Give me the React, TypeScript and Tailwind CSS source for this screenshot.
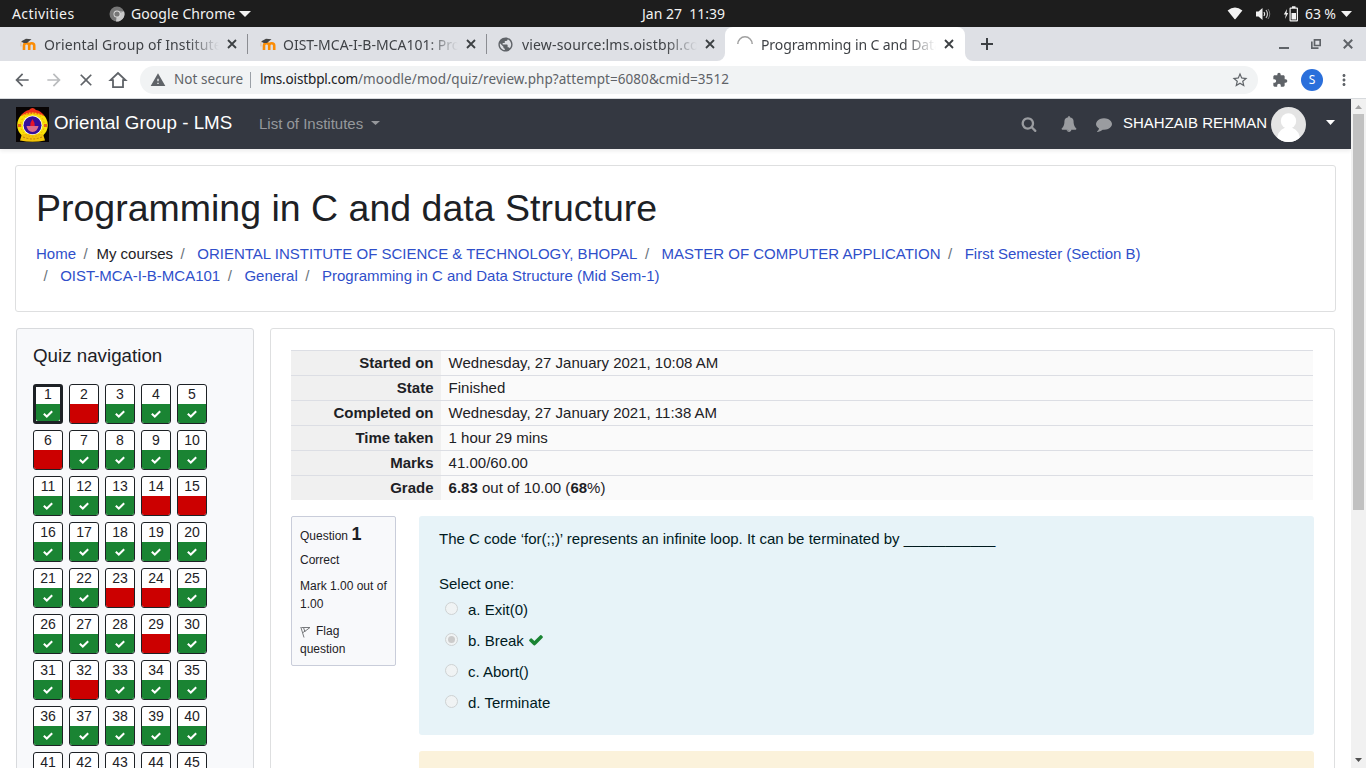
import React from "react";
import { MdArrowBack, MdArrowForward, MdClose, MdStarBorder, MdExtension, MdMoreVert, MdAdd, MdWarning, MdPublic } from "react-icons/md";

const CHECK =
  "M1671 566q0 40-28 68l-724 724-136 136q-28 28-68 28t-68-28l-136-136-362-362q-28-28-28-68t28-68l136-136q28-28 68-28t68 28l294 295 656-657q28-28 68-28t68 28l136 136q28 28 28 68z";
const SEARCH =
  "M1216 832q0-185-131.5-316.5t-316.5-131.5-316.5 131.5-131.5 316.5 131.5 316.5 316.5 131.5 316.5-131.5 131.5-316.5zm512 832q0 52-38 90t-90 38q-54 0-90-38l-343-342q-179 124-399 124-143 0-273.5-55.5t-225-150-150-225-55.5-273.5 55.5-273.5 150-225 225-150 273.5-55.5 273.5 55.5 225 150 150 225 55.5 273.5q0 220-124 399l343 343q37 37 37 90z";
const BELL =
  "M912 1696q0-16-16-16-59 0-101.5-42.5t-42.5-101.5q0-16-16-16t-16 16q0 73 51.5 124.5t124.5 51.5q16 0 16-16zm816-288q0 52-38 90t-90 38h-448q0 106-75 181t-181 75-181-75-75-181h-448q-52 0-90-38t-38-90q50-42 91-88t85-119.5 74.5-158.5 50-206 19.5-260q0-152 117-282.5t307-158.5q-8-19-8-39 0-40 28-68t68-28 68 28 28 68q0 20-8 39 190 28 307 158.5t117 282.5q0 139 19.5 260t50 206 74.5 158.5 85 119.5 91 88z";
const COMMENT =
  "M1792 896q0 174-120 321.5t-326 233-450 85.5q-70 0-145-8-198 175-460 242-49 14-114 22h-5q-15 0-27-10.5t-16-27.5v-1q-3-4-.5-12t2-10 4.5-9.5l6-9 7-8.5 8-9q7-8 31-34.5t34.5-38 31-39.5 32.5-51 27-59 26-76q-157-89-247.5-220t-90.5-281q0-174 120-321.5t326-233 450-85.5 450 85.5 326 233 120 321.5z";

function Fa({ d, className }: { d: string; className: string }) {
  return (
    <svg viewBox="0 0 1792 1792" fill="currentColor" className={className}>
      <path d={d} />
    </svg>
  );
}

function Caret({ className }: { className: string }) {
  return (
    <svg viewBox="0 0 10 5" preserveAspectRatio="none" fill="currentColor" className={className}>
      <path d="M0 0h10L5 5z" />
    </svg>
  );
}

function SystemBar() {
  return (
    <div className="flex h-[27px] shrink-0 items-center bg-[#1d1d1d] text-[14px] text-[#f2f2f2]">
      <div className="flex w-[455px] items-center pl-3">
        <span className="w-[97px] tracking-[0.42px]">Activities</span>
        <svg viewBox="0 0 16 16" className="h-4 w-4">
          <circle cx="8" cy="8" r="7.5" fill="#777" />
          <path d="M8 8 15 5.200A7.500 7.500 0 0 1 7 15.400z" fill="#c9c9c9" />
          <path d="M8 8 15 5.200H8z" fill="#aaa" />
          <circle cx="8" cy="8" r="3.5" fill="#ddd" />
          <circle cx="8" cy="8" r="2.600" fill="#777" />
        </svg>
        <span className="ml-[6px] w-[104px] whitespace-nowrap tracking-[0.07px]">Google Chrome</span>
        <Caret className="ml-1 h-[6px] w-[12px]" />
      </div>
      <div className="flex-1 pb-px pl-px text-center whitespace-pre">Jan 27  11:39</div>
      <div className="flex w-[455px] items-center justify-end pr-[14px]">
        <svg viewBox="0 0 16 13" className="h-[13px] w-4" fill="currentColor">
          <path d="M.6 3.600Q8-2.600 15.400 3.600L8.600 12Q8 12.600 7.400 12z" />
        </svg>
        <svg viewBox="0 0 16 14" className="ml-3 h-[14px] w-4" fill="none" stroke="currentColor">
          <path d="M1 4.500h2.500L7.500 1v12L3.500 9.500H1z" fill="currentColor" stroke="none" />
          <path d="M9 5q1.500 2 0 4" strokeWidth="1.200" />
          <path d="M11 3q3 4 0 8" strokeWidth="1.200" opacity=".8" />
          <path d="M13 2q3.500 5 0 10" opacity=".45" />
        </svg>
        <svg viewBox="0 0 16 16" className="ml-3 h-4 w-4" fill="currentColor">
          <path d="M4 3 .800 8.500h2L2 13l3.200-6H3.500z" />
          <path d="M6.500 2.500q0-1 1-1H9V.3h3.500v1.200H14q1 0 1 1v12q0 1-1 1H7.500q-1 0-1-1zM7.700 2.700v11.600h6.100V2.700z" fillRule="evenodd" />
          <path d="M8.500 7h4.500v6.500H8.500z" />
        </svg>
        <span className="ml-[6px] w-[31px] whitespace-nowrap tracking-[-0.1px]">63 %</span>
        <Caret className="ml-[5px] h-[6px] w-[11px]" />
      </div>
    </div>
  );
}

function MoodleIcon() {
  return (
    <svg viewBox="0 0 16 12" className="h-3 w-4">
      <path d="M4 12V7.500Q4 5.200 6.600 5.200T9.200 7.500V12M9.200 7.500Q9.200 5.200 11.700 5.200T14.200 7.500V12" fill="none" stroke="#fb8c04" strokeWidth="2.600" />
      <path d="M1 3.500 6 .8l5.500.5L9 3.200 7 5 3.800 5z" fill="#444" />
      <path d="M1.500 3.500Q.5 5 1 8.500" stroke="#e6b98e" fill="none" strokeWidth=".8" />
    </svg>
  );
}

function Tab({ icon, title, className, faded }: { icon: React.ReactNode; title: string; className: string; faded: string }) {
  return (
    <div className={"flex h-full items-center " + className}>
      {icon}
      <span className={"overflow-hidden whitespace-nowrap text-[14px] text-[#3f4246] [mask-image:linear-gradient(to_right,#000_82%,transparent)] " + faded}>
        {title}
      </span>
      <svg viewBox="0 0 14 14" className="ml-[6px] h-[14px] w-[14px]" stroke="#3c4043" strokeWidth="1.800">
        <path d="m3 3 8 8M11 3l-8 8" />
      </svg>
    </div>
  );
}

function TabStrip() {
  return (
    <div className="flex h-[34px] shrink-0 items-center bg-[#dee0e5]">
      <Tab className="w-[247px] pl-5" icon={<MoodleIcon />} title="Oriental Group of Institutes" faded="ml-2 w-[175px] tracking-[0.12px]" />
      <div className="h-5 w-px bg-[#8b8d92]" />
      <Tab className="w-[238px] pl-3" icon={<MoodleIcon />} title="OIST-MCA-I-B-MCA101: Programming" faded="ml-[7px] w-[175px] tracking-[0px]" />
      <div className="h-5 w-px bg-[#8b8d92]" />
      <div className="h-full flex-none bg-white">
        <Tab
          className="w-[238px] rounded-br-lg bg-[#dee0e5] pl-[10px]"
          icon={<MdPublic className="h-[17px] w-[17px] text-[#5f6368]" />}
          title="view-source:lms.oistbpl.com/moodle"
          faded="ml-2 w-[175px] tracking-[0.17px]"
        />
      </div>
      <div className="h-full bg-[#dee0e5]">
        <Tab
          className="w-[240px] rounded-t-lg bg-white pl-3"
          icon={
            <svg viewBox="0 0 16 16" className="h-4 w-4" fill="none">
              <path d="M.8 8A7.200 7.200 0 0 1 15.200 8" stroke="#a0a0a0" strokeWidth="1.500" />
            </svg>
          }
          title="Programming in C and Data Structure"
          faded="ml-2 w-[175px] tracking-[-0.1px]"
        />
      </div>
      <div className="flex h-full flex-1 bg-white">
        <div className="flex h-full flex-1 items-center rounded-bl-lg bg-[#dee0e5] pl-[13px] text-[#3c4043]">
          <svg viewBox="0 0 18 18" className="h-[18px] w-[18px]" stroke="currentColor" strokeWidth="2">
            <path d="M3 9h12M9 3v12" />
          </svg>
          <div className="ml-auto flex items-center gap-[22px] pr-[13px] text-[#5f6368]">
            <div className="mt-2 h-[2px] w-[10px] bg-current" />
            <svg viewBox="0 0 10 10" className="h-[10px] w-[10px]" fill="none" stroke="currentColor" strokeWidth="1.700">
              <path d="M3.500.800h5.700v5.700H3.500zM.8 2.500v6.700h6.700" />
            </svg>
            <svg viewBox="0 0 10 10" className="h-[10px] w-[10px]" stroke="currentColor" strokeWidth="2">
              <path d="m.8.800 8.400 8.400M9.200.800.800 9.200" />
            </svg>
          </div>
        </div>
      </div>
    </div>
  );
}

function Toolbar() {
  return (
    <div className="flex h-[38px] shrink-0 items-center border-b border-[#d7dadd] bg-white text-[#5f6368]">
      <div className="flex w-[140px] items-center gap-3 pl-3">
        <MdArrowBack className="h-5 w-5" />
        <MdArrowForward className="h-5 w-5 text-[#babcbe]" />
        <MdClose className="h-5 w-5" />
        <svg viewBox="0 0 20 20" className="h-5 w-5" fill="none" stroke="currentColor" strokeWidth="1.800">
          <path d="M2.500 10.200 10 3l7.500 7.200H15v7H5v-7z" />
        </svg>
      </div>
      <div className="flex h-7 w-[1118px] items-center rounded-full bg-[#f1f3f4] pl-[10px] text-[13.500px]">
        <MdWarning className="h-4 w-4" />
        <span className="ml-2 w-[69px] whitespace-nowrap tracking-[0.05px]">Not secure</span>
        <div className="mx-[7px] h-4 w-px bg-[#9aa0a6]" />
        <span className="ml-[2px] whitespace-nowrap">
          <span className="tracking-[-0.15px] text-[#202124]">lms.oistbpl.com</span>
          <span className="tracking-[0.07px]">/moodle/mod/quiz/review.php?attempt=6080&amp;cmid=3512</span>
        </span>
        <MdStarBorder className="mr-[9px] ml-auto h-[18px] w-[18px]" />
      </div>
      <MdExtension className="ml-[14px] h-4 w-4" />
      <div className="ml-[13px] flex h-[22px] w-[22px] items-center justify-center rounded-full bg-[#2a6fdb] text-[12px] text-white">S</div>
      <MdMoreVert className="ml-[12px] h-[18px] w-[18px]" />
    </div>
  );
}

function Crest() {
  return (
    <svg viewBox="0 0 33 35" className="h-[35px] w-[33px]">
      <path d="M0 0h33v35H0z" fill="#080404" />
      <ellipse cx="16.500" cy="18" rx="15.300" ry="14.500" fill="#f9e208" />
      <path d="M6 27 4 33.500q12.500 2.500 25 0L27 27z" fill="#f2c50a" />
      <path d="M4.500 9Q9 3.500 13 3q3.500-4 7 0 4.500.5 8.500 6Q24 7 16.500 7T4.500 9z" fill="#f0331c" />
      <path d="M7 8.500Q16.500 4 26 8.500" fill="none" stroke="#f9c90c" strokeDasharray="2 1" strokeWidth="1.500" />
      <circle cx="16.500" cy="18" r="11.800" fill="none" stroke="#f0a00c" strokeDasharray="1.500 2" />
      <path d="M2 17h3v3H2zM28 17h3v3h-3z" fill="#e8641a" />
      <path d="M7 30q9.500 4 19 0" fill="none" stroke="#c87a10" strokeDasharray="2 1.500" />
      <circle cx="16.500" cy="18.300" r="9.800" fill="#fff" />
      <circle cx="16.500" cy="18.300" r="9" fill="#35109a" />
      <path d="M16.500 12q2.700 4 2.200 7h-4.400q-.5-3 2.200-7z" fill="#e8142a" />
      <path d="M10.500 19h12q-1 5.500-6 6-5-.5-6-6z" fill="#dc6c8c" />
    </svg>
  );
}

function Navbar() {
  return (
    <div className="z-10 flex h-[50px] shrink-0 items-center bg-[#343841] pl-4 text-white shadow-[0_2px_4px_rgba(0,0,0,.08)]">
      <Crest />
      <span className="ml-[5px] w-[205px] pb-px text-[18.750px]">Oriental Group - LMS</span>
      <span className="text-[15px] text-[#96989c]">List of Institutes</span>
      <Caret className="mt-[-2px] ml-[8px] h-[4px] w-[9px] text-[#96989c]" />
      <div className="ml-auto flex items-center text-[#9a9ca0]">
        <Fa d={SEARCH} className="h-4 w-4" />
        <Fa d={BELL} className="ml-6 h-4 w-4" />
        <Fa d={COMMENT} className="ml-[19px] h-4 w-4" />
        <span className="ml-[11px] w-[148px] pb-[2px] text-[15px] whitespace-nowrap text-white">SHAHZAIB REHMAN</span>
        <svg viewBox="0 0 35 35" className="h-[35px] w-[35px] rounded-full">
          <path d="M0 0h35v35H0z" fill="#e4e4e4" />
          <circle cx="17.500" cy="14" r="7.700" fill="#fff" />
          <path d="M5.500 35q1-12 8-14h8q7 2 8 14z" fill="#fff" />
        </svg>
        <Caret className="mt-[-4px] mr-4 ml-5 h-[5px] w-[9px] text-white" />
      </div>
    </div>
  );
}

const CRUMBS: [string, boolean][][] = [
  [
    ["Home", true],
    ["My courses", false],
    ["ORIENTAL INSTITUTE OF SCIENCE & TECHNOLOGY, BHOPAL", true],
    ["MASTER OF COMPUTER APPLICATION", true],
    ["First Semester (Section B)", true],
  ],
  [
    ["OIST-MCA-I-B-MCA101", true],
    ["General", true],
    ["Programming in C and Data Structure (Mid Sem-1)", true],
  ],
];

function PageHeader() {
  return (
    <div className="ml-[15px] h-[147px] w-[1321px] shrink-0 rounded-[3px] border border-[#dedfe0] bg-white pt-5 pl-5">
      <h1 className="text-[37.500px] leading-[45px] text-[#1d2125]">Programming in C and data Structure</h1>
      <div className="mt-3 text-[15px] leading-[22px]">
        {CRUMBS.map((row, r) => (
          <div key={r} className="flex whitespace-nowrap">
            {row.map(([label, link], i) => (
              <React.Fragment key={label}>
                {(i > 0 || r > 0) && (
                  <span className={i > 1 || r > 0 ? "w-[24.200px] pl-[7.500px] text-[#6a737b]" : "w-[20.400px] pl-[7.500px] text-[#6a737b]"}>/</span>
                )}
                <span className={link ? "text-[#2f4fca]" : "text-[#1d2125]"}>{label}</span>
              </React.Fragment>
            ))}
          </div>
        ))}
      </div>
    </div>
  );
}

const WRONG = new Set([2, 6, 14, 15, 23, 24, 29, 32]);

function QuizNav() {
  return (
    <div className="ml-4 h-[600px] w-[238px] shrink-0 rounded-[3px] border border-[#d8dadd] bg-[#f8f9fb] pt-[13px] pl-4">
      <h2 className="text-[18.750px] leading-7 text-[#1d2125]">Quiz navigation</h2>
      <div className="mt-[14px] grid grid-cols-[repeat(5,30px)] gap-x-[6px] gap-y-[6px]">
        {Array.from({ length: 45 }, (_, i) => i + 1).map((n) => (
          <div
            key={n}
            className={
              "flex h-10 w-[30px] flex-col rounded-[3px] border-[#1d2125] bg-white text-center text-[14.060px] text-[#1d2125] " +
              (n === 1 ? "border-[3px]" : "border")
            }
          >
            <div className={"shrink-0 " + (n === 1 ? "h-[17px] leading-[15px]" : "h-[19px] leading-[19px]")}>{n}</div>
            <div className={"flex flex-1 justify-center rounded-b-[2px] " + (WRONG.has(n) ? "bg-[#cc0000]" : "bg-[#1a8433]")}>
              {!WRONG.has(n) && (
                <svg viewBox="0 0 10 8" className="mt-[6px] h-[8px] w-[10px]" fill="none" stroke="#fff" strokeWidth="2">
                  <path d="m.8 3.700 3 2.800L9.200 1.200" />
                </svg>
              )}
            </div>
          </div>
        ))}
      </div>
    </div>
  );
}

const SUMMARY: [string, React.ReactNode][] = [
  ["Started on", "Wednesday, 27 January 2021, 10:08 AM"],
  ["State", "Finished"],
  ["Completed on", "Wednesday, 27 January 2021, 11:38 AM"],
  ["Time taken", "1 hour 29 mins"],
  ["Marks", "41.00/60.00"],
  ["Grade", <><b>6.83</b> out of 10.00 (<b>68</b>%)</>],
];

const ANSWERS = ["a. Exit(0)", "b. Break", "c. Abort()", "d. Terminate"];

function Review() {
  return (
    <div className="ml-4 h-[600px] w-[1065px] shrink-0 rounded-[3px] border border-[#dedfe0] bg-white pt-[21px] pl-5 text-[15px] text-[#1d2125]">
      <div className="w-[1022px]">
        {SUMMARY.map(([k, v]) => (
          <div key={k} className="flex h-[25px] border-t border-[#dcdee4] leading-[23px]">
            <div className="w-[150px] bg-[#f0f0f0] pr-[7.500px] text-right font-bold">{k}</div>
            <div className="flex-1 bg-[#fafafa] pl-[7.600px]">{v}</div>
          </div>
        ))}
      </div>
      <div className="mt-4 flex">
        <div className="h-[150px] w-[105px] rounded-[2px] border border-[#c9cdda] bg-[#f8f9fb] pt-[6px] pl-2 text-[12px] leading-[18px]">
          <div className="h-[27px] leading-[22px] whitespace-nowrap">
            Question <b className="text-[18px]">1</b>
          </div>
          <div className="mt-[1px]">Correct</div>
          <div className="mt-2">
            Mark 1.00 out of
            <br />
            1.00
          </div>
          <div className="mt-[9px]">
            <svg viewBox="0 0 11 12" className="mr-[5px] inline-block h-3 w-[11px] align-[-3px]" fill="none" stroke="#77797c">
              <path d="M.8 1 4 11.500M1.500 1.500H10L6 4.500 3 6.500M3.500 1.500l1.500 4.500" />
            </svg>
            Flag
            <br />
            question
          </div>
        </div>
        <div className="ml-[23px] w-[895px]">
          <div className="h-[219px] rounded-[3px] bg-[#e7f3f8] pt-3 pl-5 text-[#001a1e]">
            <div className="leading-[22px]">The C code ‘for(;;)’ represents an infinite loop. It can be terminated by ___________</div>
            <div className="mt-[23px] leading-[22px]">Select one:</div>
            <div>
              {ANSWERS.map((a, i) => (
                <div key={a} className="flex h-[31px] items-center pb-[1px]">
                  <div className="mt-[-3px] ml-[6px] flex h-[13px] w-[13px] items-center justify-center rounded-full border border-[#ced2d3] bg-[#f0f3f4]">
                    {i === 1 && <div className="h-[7px] w-[7px] rounded-full bg-[#cbcbcb]" />}
                  </div>
                  <span className="ml-[10px]">{a}</span>
                  {i === 1 && <Fa d={CHECK} className="mt-[-2px] ml-1 h-4 w-4 text-[#1a8433]" />}
                </div>
              ))}
            </div>
          </div>
          <div className="mt-4 h-20 rounded-[3px] bg-[#fbf2db]" />
        </div>
      </div>
    </div>
  );
}

export default function App() {
  return (
    <div className="flex h-[768px] w-[1366px] flex-col overflow-hidden bg-white font-['Noto_Sans',sans-serif]">
      <SystemBar />
      <TabStrip />
      <Toolbar />
      <div className="flex min-h-0 flex-1">
        <div className="flex w-[1351px] flex-col overflow-hidden font-['Liberation_Sans',Arial,sans-serif]">
          <Navbar />
          <div className="h-4 shrink-0" />
          <PageHeader />
          <div className="mt-4 flex">
            <QuizNav />
            <Review />
          </div>
        </div>
        <div className="flex w-[15px] flex-col items-center bg-[#f1f1f1]">
          <Caret className="my-[6px] h-[4px] w-[7px] shrink-0 rotate-180 text-[#a3a3a3]" />
          <div className="mt-[-1px] h-[396px] w-[11px] bg-[#c1c1c1]" />
          <Caret className="mt-auto mb-[6px] h-[4px] w-[7px] text-[#505050]" />
        </div>
      </div>
    </div>
  );
}
